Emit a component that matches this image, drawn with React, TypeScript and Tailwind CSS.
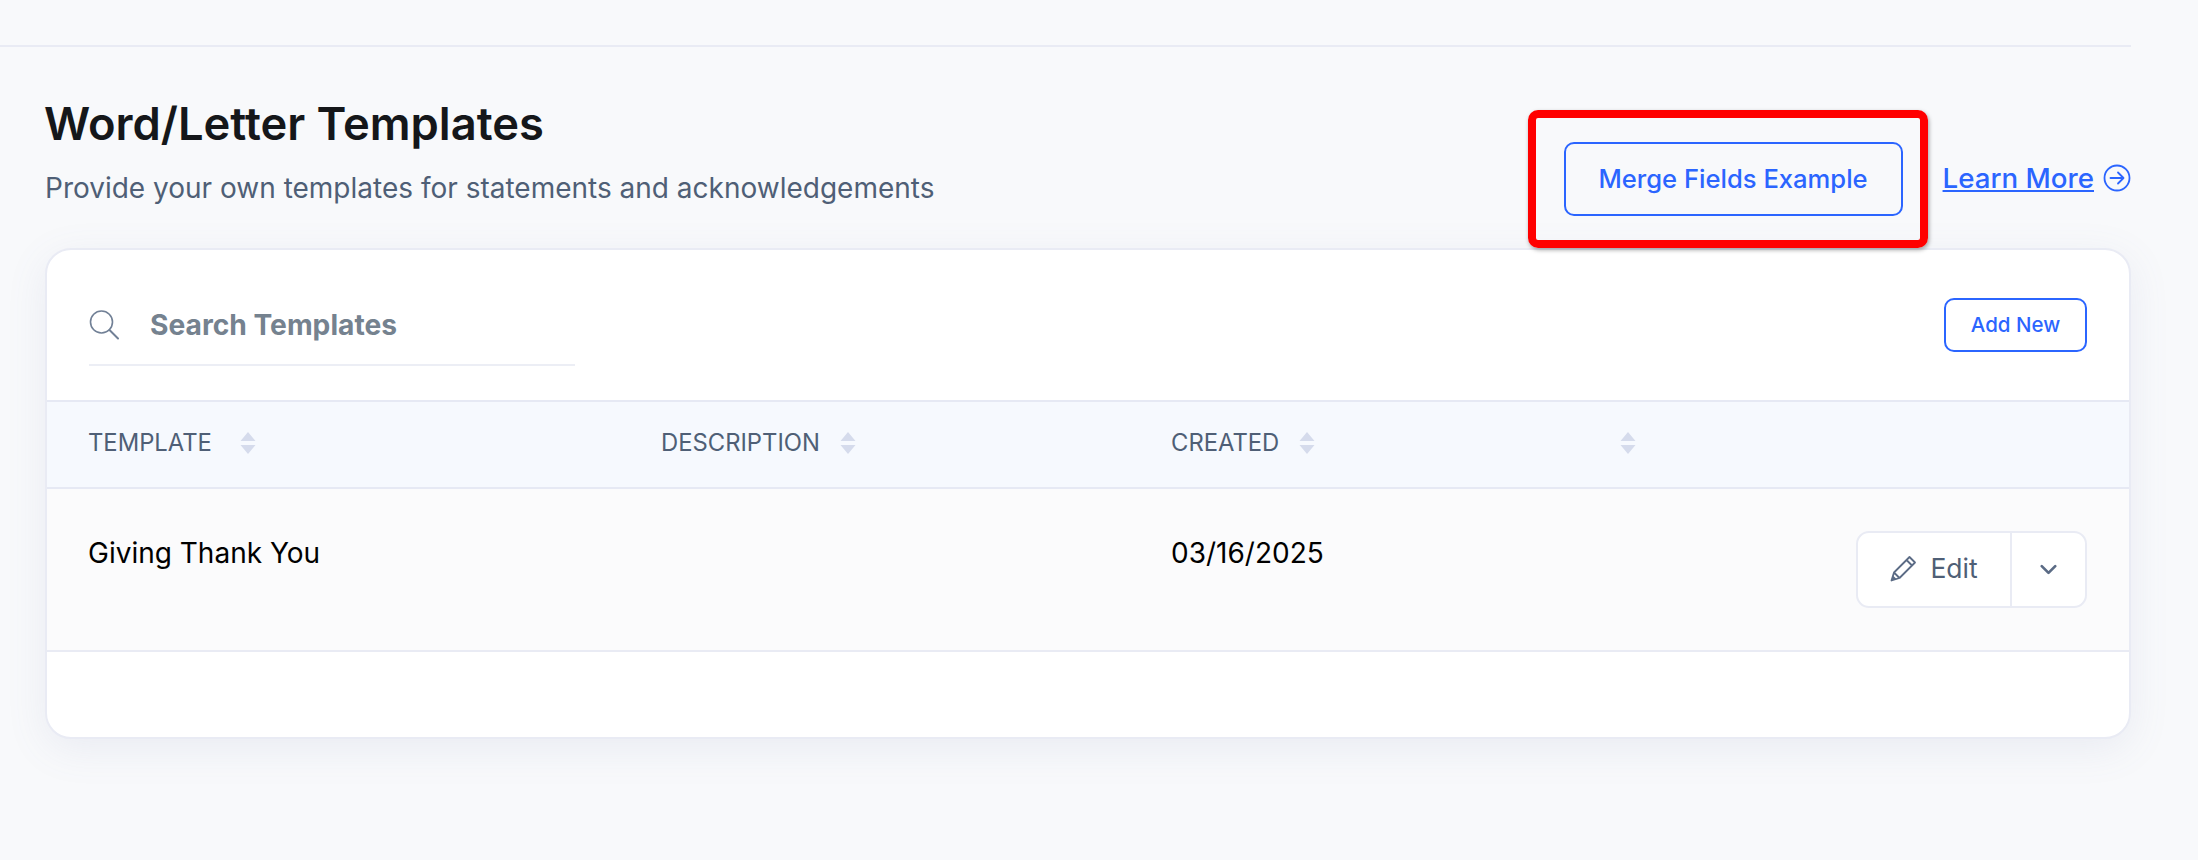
import { ChevronDown } from 'lucide-react'

const SortIcon = () => (
  <svg width="16" height="22" viewBox="0 0 16 22" className="text-[#d5dbec]">
    <path d="M8 0 L15.5 9 H0.5 Z M0.5 13 H15.5 L8 22 Z" fill="currentColor" />
  </svg>
)

const HeaderCell = ({ label, gap = 'gap-7' }: { label?: string; gap?: string }) => (
  <div className={`flex items-center ${gap}`}>
    {label && <span className="text-[23.8px] text-[#4f5f76]">{label}</span>}
    <SortIcon />
  </div>
)

const App = () => {
  return (
    <div className="h-[860px] w-[2198px] overflow-hidden bg-[#f8f9fb] font-['Inter',sans-serif]">
      <div className="h-[47px] w-[2131px] border-b-2 border-[#e9ebf4]" />

      <div className="w-[2131px] pl-[45px] pt-[50px]">
        <div className="flex h-[151px] items-start justify-between">
          <div>
            <h1 className="-ml-px text-[45.3px] leading-[54px] font-semibold text-[#15171a]">Word/Letter Templates</h1>
            <p className="mt-[20px] text-[28px] leading-[34px] text-[#4f5f76]">
              Provide your own templates for statements and acknowledgements
            </p>
          </div>
          <div className="flex items-center pt-[45px]">
            <div className="relative">
              <button className="h-[74px] w-[339px] rounded-[10px] border-2 border-[#2b65ff] text-[25.6px] font-medium text-[#2b65ff]">
                Merge Fields Example
              </button>
              <div className="absolute -top-[32px] -right-[25px] -bottom-[32px] -left-[36px] rounded-[10px] border-[8px] border-[#ff0000] shadow-[1px_2px_4px_rgba(0,0,0,0.35)]" />
            </div>
            <a className="mb-[2px] ml-[40px] text-[27.7px] leading-[34px] font-medium text-[#2b65ff] underline">Learn More</a>
            <svg width="28" height="28" viewBox="0 0 28 28" fill="none" className="mb-[2px] ml-[9px] text-[#2b65ff]">
              <circle cx="14" cy="14" r="12.5" stroke="currentColor" strokeWidth="1.8" />
              <path d="M7.5 14 H20 M15 8.5 L20.5 14 L15 19.5" stroke="currentColor" strokeWidth="1.8" strokeLinecap="round" strokeLinejoin="round" />
            </svg>
          </div>
        </div>

        <div className="h-[491px] rounded-[26px] border-2 border-[#e9ebf4] bg-white shadow-[0_10px_40px_rgba(110,120,170,0.10)]">
          <div className="flex h-[150px] items-start justify-between pr-[42px] pl-[42px]">
            <div className="flex h-[116px] w-[486px] items-center gap-[31px] border-b-2 border-[#eceef5] pt-[36px]">
              <svg width="30" height="30" viewBox="0 0 30 30" fill="none" className="text-[#718096]">
                <circle cx="12.5" cy="12" r="11" stroke="currentColor" strokeWidth="1.6" />
                <path d="M20.5 20 L29 28.5" stroke="currentColor" strokeWidth="2" strokeLinecap="round" />
              </svg>
              <span className="text-[28.2px] font-bold text-[#75828f]">Search Templates</span>
            </div>
            <button className="mt-[48px] h-[54px] w-[143px] rounded-[10px] border-2 border-[#2b65ff] text-[20.5px] font-medium text-[#2b65ff]">
              Add New
            </button>
          </div>

          <div className="grid h-[89px] grid-cols-[573px_510px_449px_1fr] items-center border-y-2 border-[#e6e9f4] bg-[#f6f9fe] pb-[3px] pl-[41px]">
            <HeaderCell label="TEMPLATE" />
            <HeaderCell label="DESCRIPTION" gap="gap-5" />
            <HeaderCell label="CREATED" gap="gap-5" />
            <HeaderCell />
          </div>

          <div className="grid h-[163px] grid-cols-[573px_510px_1fr] border-b-2 border-[#e9ebf4] bg-[#fbfbfc] pr-[42px] pl-[41px]">
            <div className="pt-[47px] text-[28px] leading-[34px] text-black">Giving Thank You</div>
            <div />
            <div className="flex items-start justify-between">
              <div className="pt-[47px] text-[28px] leading-[34px] text-black">03/16/2025</div>
              <div className="mt-[42px] flex h-[77px] w-[231px] rounded-[13px] border-2 border-[#e9ebf4] bg-white">
                <button className="flex w-[154px] items-center justify-center gap-[13px] border-r-2 border-[#e9ebf4] pb-[2px] text-[26.5px] font-normal text-[#4f5f76]">
                  <svg width="27" height="27" viewBox="0 0 27 27" fill="none" className="text-[#5b6b85]">
                    <path d="M1.5 25.5 L4 17.5 L19.5 2 L25 7.5 L9.5 23 Z M16.5 5 L22 10.5 M4 17.5 L9.5 23" stroke="currentColor" strokeWidth="1.8" strokeLinejoin="round" />
                    <path d="M1.5 25.5 L3 20.5 L6.5 24 Z" fill="currentColor" />
                  </svg>
                  Edit
                </button>
                <button className="flex flex-1 items-center justify-center text-[#5b6b85]">
                  <ChevronDown size={27} strokeWidth={2.4} />
                </button>
              </div>
            </div>
          </div>
        </div>
      </div>
    </div>
  )
}

export default App
